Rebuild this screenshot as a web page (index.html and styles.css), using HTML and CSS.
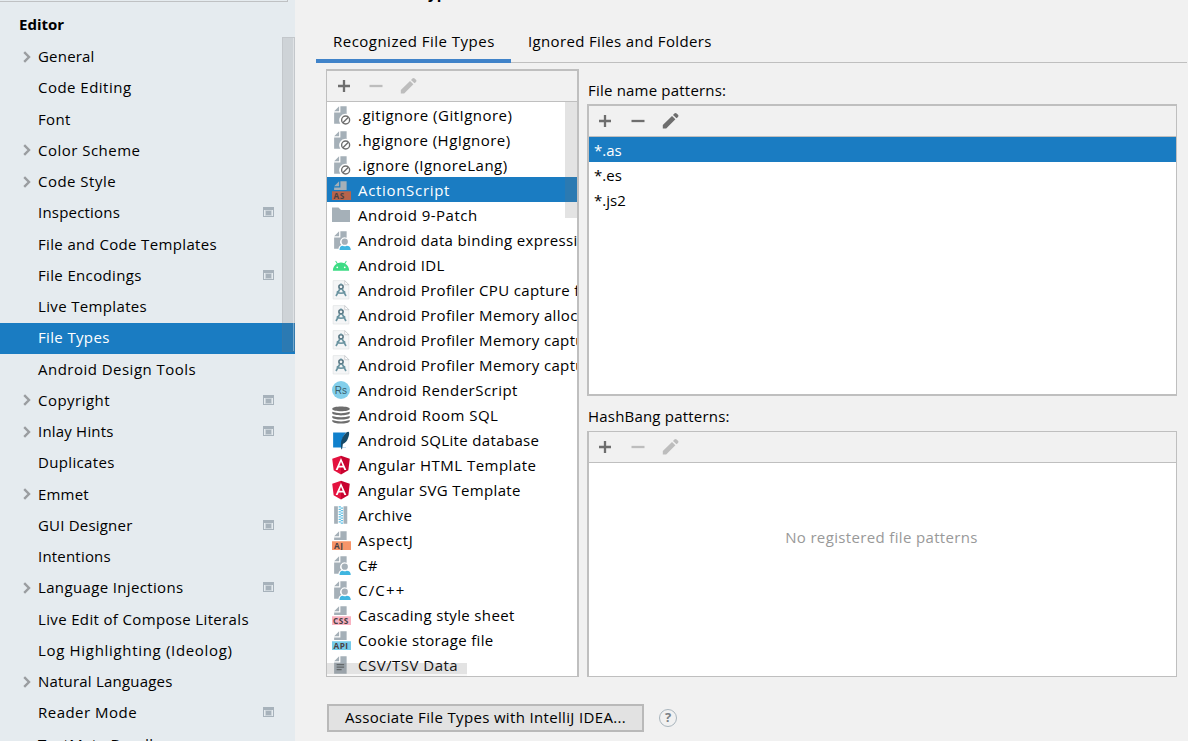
FILE: index.html
```html
<!DOCTYPE html>
<html lang="en">
<head>
<meta charset="utf-8">
<title>File Types</title>
<link rel="stylesheet" href="styles.css">
</head>
<body>
<svg class="defs" width="0" height="0">
  <symbol id="chev" viewBox="0 0 8 12"><path d="M1.2 1.2L6 6L1.2 10.8" fill="none" stroke="#9a9da0" stroke-width="2.4"/></symbol>
  <symbol id="proj" viewBox="0 0 11 10"><path fill="#a7b2bb" fill-rule="evenodd" d="M0 0H11V10H0ZM1 3V9H10V3Z"/><path fill="#a7b2bb" d="M3 4H8V8H3Z"/><path fill="none" stroke="#cbd3d9" d="M2.5 3.5H8.5V8.5H2.5Z"/></symbol>
  <symbol id="plus" viewBox="0 0 20 20"><path d="M10 4V16M4 10H16" stroke="currentColor" stroke-width="2.3"/></symbol>
  <symbol id="minus" viewBox="0 0 20 20"><path d="M3.5 10H16.5" stroke="currentColor" stroke-width="2.3"/></symbol>
  <symbol id="pencil" viewBox="0 0 20 20"><path fill="currentColor" transform="translate(.8 -.3)" d="M2 14.3L11.2 5.2L14.6 8.6L5.4 17.7H2ZM12.2 4.2L13.6 2.7Q14.7 1.7 15.8 2.7L17.2 4.1Q18.2 5.2 17.2 6.2L15.7 7.6Z"/></symbol>
  <symbol id="ignore" viewBox="0 0 16 16"><path fill="#a5b0b8" d="M6.5 1L2.5 5H6.5ZM7.5 1V6H2.5V15H7.5A5 5 0 0 1 12.5 7.2V1Z"/><circle cx="11.7" cy="12" r="3.2" fill="none" stroke="#6e6e6e" stroke-width="1.1"/><path d="M9.5 14.2L13.9 9.8" stroke="#6e6e6e" stroke-width="1.1"/></symbol>
  <symbol id="half" viewBox="0 0 16 16"><path fill="#a5b0b8" d="M6.5 1L2.5 5H6.5ZM7.5 1V6H2.5V8H12.5V1Z"/></symbol>
  <symbol id="user" viewBox="0 0 16 16"><path fill="#a5b0b8" d="M6.5 1L2.5 5H6.5ZM7.5 1V6H2.5V15H6Q6 12.8 8.4 12A3.6 3.6 0 0 1 12.5 6.2V1Z"/><circle cx="11" cy="9.3" r="2.5" fill="#a5b0b8"/><path fill="#40b6e0" d="M6.8 16Q6.8 12.6 9.5 12.6Q11 13.5 12.5 12.6Q15.8 12.6 15.8 16Z"/></symbol>
  <symbol id="folder" viewBox="0 0 16 16"><path fill="#a5b0b8" d="M.8 2H6L8 4H15.2V13.5H.8Z"/></symbol>
  <symbol id="android" viewBox="0 0 16 16"><path fill="#3ddc84" d="M1.5 12.5A6.5 6.5 0 0 1 4.6 7L3.4 4.9L4 4.5L5.3 6.6Q8 5.5 10.7 6.6L12 4.5L12.6 4.9L11.4 7A6.5 6.5 0 0 1 14.5 12.5Z"/><circle cx="5" cy="9.8" r=".7" fill="#fff"/><circle cx="11" cy="9.8" r=".7" fill="#fff"/></symbol>
  <symbol id="profiler" viewBox="0 0 16 16"><path fill="#f4f5f6" stroke="#e2e4e6" stroke-width=".6" d="M1.7 .5H11L14.3 3.8V15.2H1.7Z"/><path fill="#fff" stroke="#b8bcbf" stroke-width=".5" d="M11 .5V3.8H14.3Z"/><circle cx="8" cy="5.4" r="1.7" fill="none" stroke="#52727f" stroke-width="1.2"/><path fill="none" stroke="#6b94a1" stroke-width="1.3" d="M8 2.8V4M7.2 7L4 12.8M8.8 7L12 12.8M4.6 9.2Q8 12 11.4 9.2"/></symbol>
  <symbol id="rs" viewBox="0 0 16 16"><circle cx="8" cy="8" r="7.2" fill="#83cfeb"/></symbol>
  <symbol id="db" viewBox="0 0 16 16"><path fill="#6e6e6e" d="M1 3.2C1 .6 15 .6 15 3.2C15 5.6 1 5.6 1 3.2ZM1 5.4Q8 7.6 15 5.4V6.6C14 8.9 2 8.9 1 6.6ZM1 8.7Q8 10.9 15 8.7V9.9C14 12.2 2 12.2 1 9.9ZM1 12Q8 14.2 15 12V13C14 15.5 2 15.5 1 13Z"/></symbol>
  <symbol id="sqlite" viewBox="0 0 16 16"><path fill="#1080cc" d="M1.7 2H12V14H1.7Z"/><path fill="#fff" d="M9 14Q7.8 7 12 2H15V8L12 12.6V14Z"/><path fill="#174a68" d="M8.2 15.3Q7 7.5 11 3.3Q13 1 14.3 1.5Q15 3 13.6 6.6Q12.5 10 9.5 11.2L8.8 15.3Z"/></symbol>
  <symbol id="angular" viewBox="0 0 16 16"><path fill="#c8032f" d="M8 .5L15 3L13.9 12.2L8 15.5Z"/><path fill="#e4123f" d="M8 .5L1 3L2.1 12.2L8 15.5Z"/><path fill="#fff" fill-rule="evenodd" d="M8 2.4L3.7 12H5.3L6.2 9.9H9.8L10.7 12H12.3ZM8 5.4L9.3 8.5H6.7Z"/></symbol>
  <symbol id="archive" viewBox="0 0 16 16"><path fill="#a5b0b8" d="M2.5 1H5.5V15H2.5ZM10 1H13V15H10Z"/><path stroke="#5fc0e5" stroke-width="1.8" stroke-dasharray="1 1" d="M7 1V15"/><path stroke="#5fc0e5" stroke-width="1.8" stroke-dasharray="1 1" stroke-dashoffset="1" d="M8.7 1V15"/></symbol>
  <symbol id="text" viewBox="0 0 16 16"><path fill="#a5b0b8" d="M6.5 1L2.5 5H6.5ZM7.5 1V6H2.5V15H12.5V1Z"/><path stroke="#5e6366" stroke-width="1" d="M4.5 7.7H10.5M4.5 9.7H10.5M4.5 11.7H8.5"/></symbol>
</svg>
<aside class="side">
  <div class="search-edge"></div>
  <nav class="tree">
    <div class="node root">Editor</div>
    <div class="node snug"><svg class="chev"><use href="#chev"/></svg><span>General</span></div>
    <div class="node loose"><span>Code Editing</span></div>
    <div class="node"><span>Font</span></div>
    <div class="node loose"><svg class="chev"><use href="#chev"/></svg><span>Color Scheme</span></div>
    <div class="node loose"><svg class="chev"><use href="#chev"/></svg><span>Code Style</span></div>
    <div class="node snug"><span>Inspections</span><svg class="proj"><use href="#proj"/></svg></div>
    <div class="node"><span>File and Code Templates</span></div>
    <div class="node"><span>File Encodings</span><svg class="proj"><use href="#proj"/></svg></div>
    <div class="node"><span>Live Templates</span></div>
    <div class="node active"><span>File Types</span></div>
    <div class="node loose"><span>Android Design Tools</span></div>
    <div class="node loose"><svg class="chev"><use href="#chev"/></svg><span>Copyright</span><svg class="proj"><use href="#proj"/></svg></div>
    <div class="node snug"><svg class="chev"><use href="#chev"/></svg><span>Inlay Hints</span><svg class="proj"><use href="#proj"/></svg></div>
    <div class="node"><span>Duplicates</span></div>
    <div class="node snug"><svg class="chev"><use href="#chev"/></svg><span>Emmet</span></div>
    <div class="node snug"><span>GUI Designer</span><svg class="proj"><use href="#proj"/></svg></div>
    <div class="node snug"><span>Intentions</span></div>
    <div class="node"><svg class="chev"><use href="#chev"/></svg><span>Language Injections</span><svg class="proj"><use href="#proj"/></svg></div>
    <div class="node"><span>Live Edit of Compose Literals</span></div>
    <div class="node wide"><span>Log Highlighting (Ideolog)</span></div>
    <div class="node snug"><svg class="chev"><use href="#chev"/></svg><span>Natural Languages</span></div>
    <div class="node loose"><span>Reader Mode</span><svg class="proj"><use href="#proj"/></svg></div>
    <div class="node"><span>TextMate Bundles</span></div>
  </nav>
  <div class="side-thumb"></div>
</aside>
<main class="main">
  <div class="crumb"><span>Editor</span><span>›</span><span>File Types</span></div>
  <div class="tabs"><div class="tab on loose">Recognized File Types</div><div class="tab">Ignored Files and Folders</div></div>
  <div class="cols">
    <section class="panel types">
      <div class="bar"><svg><use href="#plus"/></svg><svg class="off"><use href="#minus"/></svg><svg class="off"><use href="#pencil"/></svg></div>
      <div class="list">
        <div class="item loose"><svg><use href="#ignore"/></svg>.gitignore (GitIgnore)</div>
        <div class="item loose"><svg><use href="#ignore"/></svg>.hgignore (HgIgnore)</div>
        <div class="item loose"><svg><use href="#ignore"/></svg>.ignore (IgnoreLang)</div>
        <div class="item wide sel"><svg viewBox="0 0 16 16"><use href="#half"/><rect x=".8" y="9" width="15.2" height="7" fill="#b9644c"/><text class="badge" x="2" y="15">AS</text></svg>ActionScript</div>
        <div class="item loose"><svg><use href="#folder"/></svg>Android 9-Patch</div>
        <div class="item"><svg><use href="#user"/></svg>Android data binding expression</div>
        <div class="item"><svg><use href="#android"/></svg>Android IDL</div>
        <div class="item"><svg><use href="#profiler"/></svg>Android Profiler CPU capture file</div>
        <div class="item"><svg><use href="#profiler"/></svg>Android Profiler Memory allocation</div>
        <div class="item"><svg><use href="#profiler"/></svg>Android Profiler Memory capture</div>
        <div class="item"><svg><use href="#profiler"/></svg>Android Profiler Memory capture</div>
        <div class="item loose"><svg viewBox="0 0 16 16"><use href="#rs"/><text class="rs" x="3" y="11">Rs</text></svg>Android RenderScript</div>
        <div class="item loose"><svg><use href="#db"/></svg>Android Room SQL</div>
        <div class="item"><svg><use href="#sqlite"/></svg>Android SQLite database</div>
        <div class="item loose"><svg><use href="#angular"/></svg>Angular HTML Template</div>
        <div class="item"><svg><use href="#angular"/></svg>Angular SVG Template</div>
        <div class="item"><svg><use href="#archive"/></svg>Archive</div>
        <div class="item wide"><svg viewBox="0 0 16 16"><use href="#half"/><rect x=".8" y="9" width="15.2" height="7" fill="#f7956a"/><text class="badge" x="2.4" y="15">AJ</text></svg>AspectJ</div>
        <div class="item"><svg><use href="#user"/></svg>C#</div>
        <div class="item cpp"><svg><use href="#user"/></svg>C/C++</div>
        <div class="item"><svg viewBox="0 0 16 16"><use href="#half"/><rect x=".8" y="9" width="15.2" height="7" fill="#f9b2c1"/><text class="badge" x="1.6" y="15">CSS</text></svg>Cascading style sheet</div>
        <div class="item"><svg viewBox="0 0 16 16"><use href="#half"/><rect x=".8" y="9" width="15.2" height="7" fill="#75cbea"/><text class="badge" x="2" y="15">API</text></svg>Cookie storage file</div>
        <div class="item loose"><svg><use href="#text"/></svg>CSV/TSV Data</div>
        <div class="vthumb"></div><div class="hthumb"></div>
      </div>
    </section>
    <div class="right">
      <div class="label first">File name patterns:</div>
      <section class="panel names">
        <div class="bar"><svg><use href="#plus"/></svg><svg><use href="#minus"/></svg><svg><use href="#pencil"/></svg></div>
        <div class="list"><div class="pat sel">*.as</div><div class="pat">*.es</div><div class="pat">*.js2</div></div>
      </section>
      <div class="label second">HashBang patterns:</div>
      <section class="panel hash">
        <div class="bar"><svg><use href="#plus"/></svg><svg class="off"><use href="#minus"/></svg><svg class="off"><use href="#pencil"/></svg></div>
        <div class="list empty">No registered file patterns</div>
      </section>
    </div>
  </div>
  <div class="foot"><button class="btn">Associate File Types with IntelliJ IDEA...</button><div class="help">?</div></div>
</main>
</body>
</html>
```
FILE: styles.css
```css
* { box-sizing: border-box; }
body { margin: 0; width: 1188px; height: 741px; overflow: hidden; display: flex; background: #f1f1f1; color: #000; font: 15px "Open Sans", "Noto Sans", sans-serif; letter-spacing: .35px; white-space: nowrap; }
.snug { letter-spacing: .2px; }
.loose { letter-spacing: .48px; }
.wide { letter-spacing: .68px; }
.cpp { letter-spacing: 1.2px; }
.defs { position: absolute; }
.side { position: relative; width: 295px; height: 741px; overflow: hidden; background: #e5ebef; flex: none; }
.search-edge { width: 288px; height: 2px; border: solid #bfc1c3; border-width: 0 1px 1px 0; }
.tree { padding-top: 7.6px; }
.node { position: relative; display: flex; align-items: center; height: 31.25px; padding: 0 0 2.6px 38px; }
.root { height: 32.15px; padding: 0 0 4px 19px; font-weight: 700; letter-spacing: 0; }
.active { background: #1a7cc2; color: #fff; }
.chev { position: absolute; left: 22.5px; top: 9px; width: 8px; height: 12px; }
.proj { width: 11px; height: 10px; margin-left: auto; margin-right: 21px; }
.side-thumb { position: absolute; left: 282px; top: 37px; width: 13px; height: 315px; background: rgba(115,115,120,.2); border: 1px solid rgba(115,115,120,.12); box-shadow: inset -1px 0 rgba(255,255,255,.35); }
.active::after { content: ""; position: absolute; right: 0; top: 0; width: 2px; height: 31px; background: #1a7cc2; }
.main { width: 893px; height: 741px; padding-left: 21px; overflow: hidden; }
.crumb { height: 22px; margin-top: -18px; display: flex; gap: 10px; font-weight: 700; line-height: 22px; letter-spacing: .2px; }
.tabs { display: flex; width: 871px; height: 59px; border-bottom: 1px solid #bfbfbf; }
.tab { height: 59px; padding: 26px 17px 0 17px; line-height: 23px; }
.on { width: 195px; border-bottom: 4px solid #4083c9; }
.cols { display: flex; gap: 8px; padding: 6px 0 0 10px; }
.panel { border: 1px solid #bfbfbf; display: flex; flex-direction: column; overflow: hidden; }
.bar { height: 31px; flex: none; display: flex; align-items: center; gap: 12.5px; padding-left: 7px; border-bottom: 1px solid #bfbfbf; color: #6e6e6e; }
.bar svg { width: 20px; height: 20px; }
.types .bar { gap: 12.2px; }
.bar .off { color: #bdbdbd; }
.list { position: relative; flex: 1; min-height: 0; background: #fff; overflow: hidden; }
.types { width: 253px; height: 608px; border-top-width: 2px; border-right-width: 2px; }
.item { display: flex; align-items: center; gap: 7px; height: 25px; padding-left: 4px; }
.item svg { width: 20px; height: 20px; flex: none; }
.sel { background: #1a7cc2; color: #fff; }
.vthumb { position: absolute; right: 0; top: 0; width: 12px; height: 116px; background: rgba(115,115,115,.2); }
.hthumb { position: absolute; left: 0; bottom: 0; width: 140px; height: 13px; background: rgba(115,115,115,.2); border-bottom: 2px solid rgba(255,255,255,.7); }
.badge { font: 700 6.6px "Open Sans", sans-serif; letter-spacing: .35px; fill: #4a4144; }
.rs { font: 8px "Liberation Sans", sans-serif; letter-spacing: 0; fill: #385d6b; }
.right { width: 590px; }
.label { height: 35px; padding: 10px 0 0 1px; line-height: 22px; letter-spacing: .2px; }
.second { padding-top: 9px; }
.names { height: 292px; border-width: 2px 1px 2px 2px; }
.names .bar, .hash .bar { padding-left: 6px; }
.hash { height: 246px; border-left-width: 2px; }
.pat { height: 25px; line-height: 27px; padding-left: 5px; letter-spacing: 0; }
.empty { color: #999; text-align: center; padding: 63px 2px 0 0; line-height: 22px; }
.foot { display: flex; align-items: center; gap: 15px; padding: 27px 0 0 11px; }
.btn { width: 317px; height: 28px; padding: 0 0 2px; border: 2px solid #b9b9b9; background: #e2e2e2; font: inherit; letter-spacing: .34px; color: #000; line-height: 22px; }
.help { width: 18px; height: 18px; border: 1.5px solid #a9b5bd; border-radius: 50%; color: #7a8085; font: 700 13px/15px "Open Sans", sans-serif; letter-spacing: 0; text-align: center; }
```
